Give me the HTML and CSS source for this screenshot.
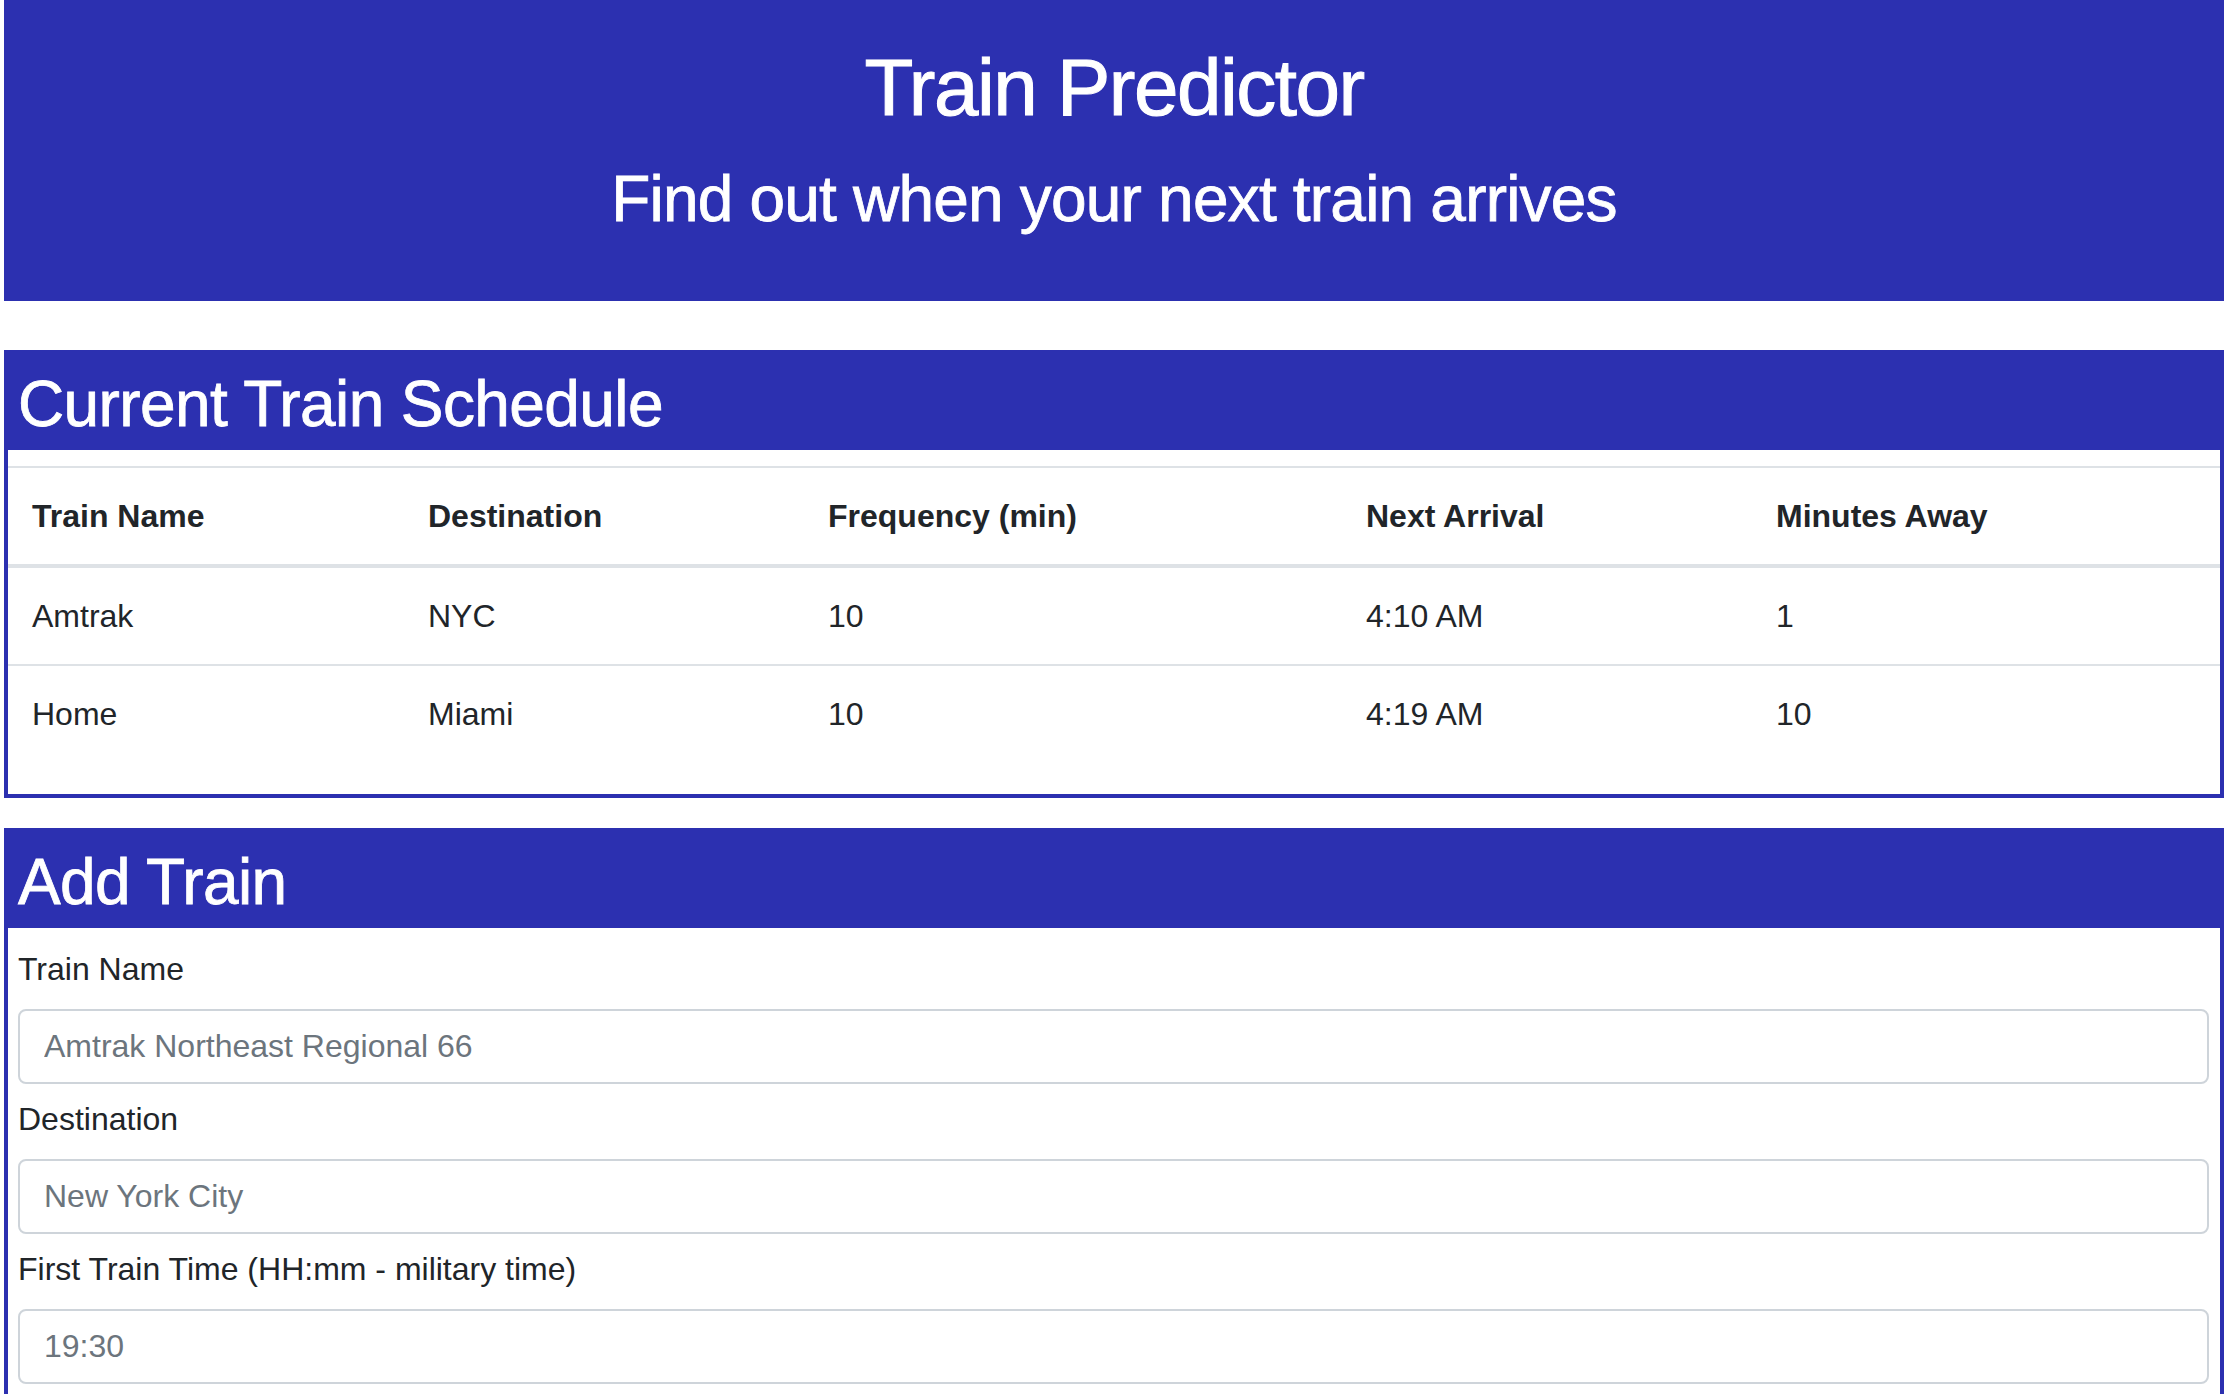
FILE: index.html
```html
<!DOCTYPE html>
<html lang="en">
<head>
<meta charset="utf-8">
<title>Train Predictor</title>
<link rel="stylesheet" href="styles.css">
</head>
<body>
  <header class="jumbotron">
    <h1 class="title">Train Predictor</h1>
    <h2 class="subtitle">Find out when your next train arrives</h2>
  </header>

  <section class="panel panel-schedule">
    <div class="panel-header"><h2 class="panel-title">Current Train Schedule</h2></div>
    <div class="panel-body schedule-body">
      <table class="schedule">
        <thead>
          <tr>
            <th class="col-name">Train Name</th>
            <th class="col-dest">Destination</th>
            <th class="col-freq">Frequency (min)</th>
            <th class="col-next">Next Arrival</th>
            <th class="col-away">Minutes Away</th>
          </tr>
        </thead>
        <tbody>
          <tr><td>Amtrak</td><td>NYC</td><td>10</td><td>4:10 AM</td><td>1</td></tr>
          <tr><td>Home</td><td>Miami</td><td>10</td><td>4:19 AM</td><td>10</td></tr>
        </tbody>
      </table>
    </div>
  </section>

  <section class="panel panel-add">
    <div class="panel-header"><h2 class="panel-title">Add Train</h2></div>
    <form class="panel-body form-body">
      <div class="form-group">
        <label class="form-label" for="train-name">Train Name</label>
        <input class="form-input" id="train-name" type="text" placeholder="Amtrak Northeast Regional 66">
      </div>
      <div class="form-group">
        <label class="form-label" for="destination">Destination</label>
        <input class="form-input" id="destination" type="text" placeholder="New York City">
      </div>
      <div class="form-group">
        <label class="form-label" for="first-time">First Train Time (HH:mm - military time)</label>
        <input class="form-input" id="first-time" type="text" placeholder="19:30">
      </div>
    </form>
  </section>
</body>
</html>
```

FILE: styles.css
```css
body {
  margin: 0;
  padding-left: 4px;
  font-family: "Liberation Sans", Arial, Helvetica, sans-serif;
  font-size: 32px;
  line-height: 48px;
  color: #212529;
  background: #ffffff;
}

.jumbotron {
  background: #2c30b0;
  color: #ffffff;
  text-align: center;
  padding: 40px 0 63px;
  margin: 0 0 49px;
}

.title {
  font-size: 80px;
  line-height: 96px;
  font-weight: 500;
  letter-spacing: -1.5px;
  -webkit-text-stroke: 1px #ffffff;
  margin: 0 0 25px;
}

.subtitle {
  font-size: 64px;
  line-height: 77px;
  font-weight: 500;
  letter-spacing: -0.8px;
  -webkit-text-stroke: 0.8px #ffffff;
  margin: 0;
}

.panel-schedule {
  margin-bottom: 30px;
}

.panel-header {
  background: #2c30b0;
  color: #ffffff;
  padding: 16px 14px 7px;
}

.panel-title {
  font-size: 64px;
  line-height: 77px;
  font-weight: 500;
  letter-spacing: -0.6px;
  -webkit-text-stroke: 0.8px #ffffff;
  margin: 0;
}

.panel-body {
  border: 4px solid #2c30b0;
  border-top: 0;
  margin: 0;
}

.schedule-body {
  padding-top: 16px;
}

.schedule {
  width: 100%;
  border-collapse: collapse;
  margin-bottom: 32px;
}

.schedule th,
.schedule td {
  padding: 24px;
  text-align: left;
  vertical-align: top;
  border-top: 2px solid #dee2e6;
}

.schedule thead th {
  border-bottom: 4px solid #dee2e6;
  font-weight: bold;
}

.col-name { width: 348px; }
.col-dest { width: 352px; }
.col-freq { width: 490px; }
.col-next { width: 362px; }

.form-body {
  padding: 17px 11px 40px 10px;
}

.form-group {
  margin-bottom: 11px;
}

.form-label {
  display: block;
  margin-bottom: 16px;
}

.form-input {
  display: block;
  box-sizing: border-box;
  width: 100%;
  height: 75px;
  padding: 0 24px;
  font-family: inherit;
  font-size: 32px;
  color: #495057;
  background: #ffffff;
  border: 2px solid #ced4da;
  border-radius: 8px;
  outline: none;
}

.form-input::placeholder {
  color: #6c757d;
  opacity: 1;
}
```
